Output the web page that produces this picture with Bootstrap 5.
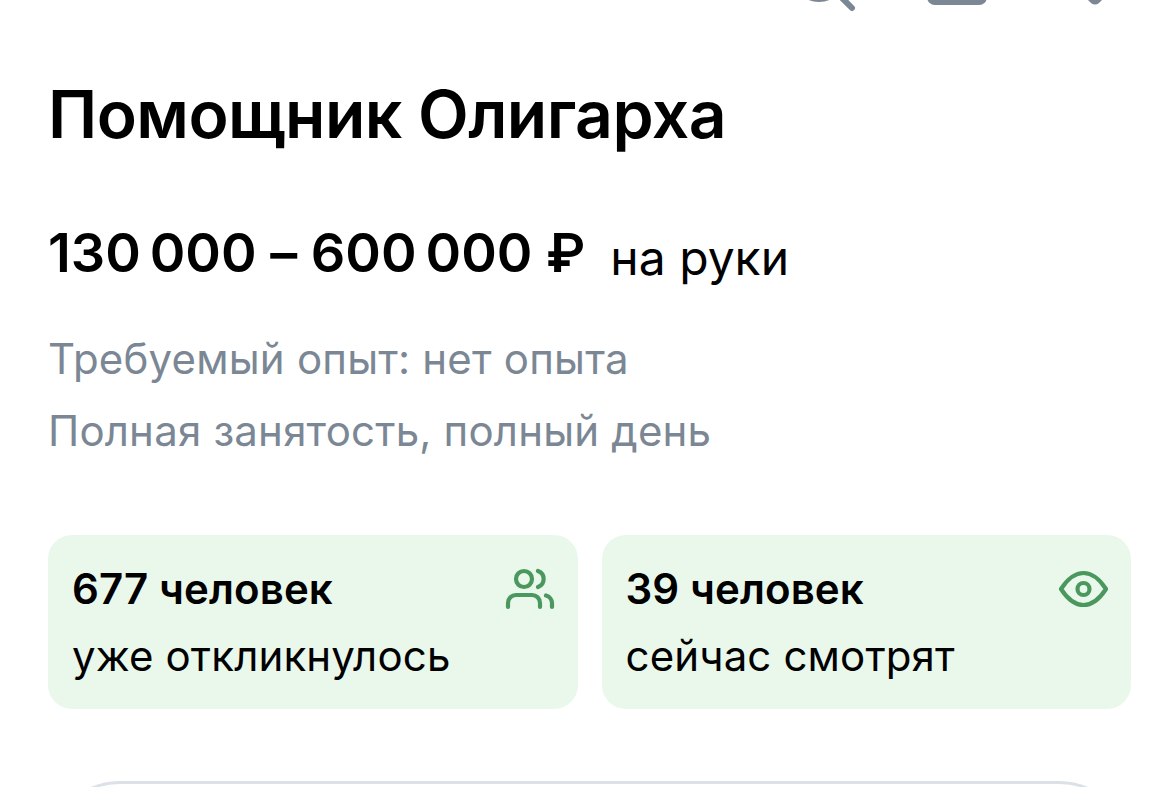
<!DOCTYPE html>
<html lang="ru">
<head>
    <meta charset="UTF-8">
    <meta name="viewport" content="width=device-width, initial-scale=1.0">
    <title>Помощник Олигарха</title>
    <link href="https://cdn.jsdelivr.net/npm/bootstrap@5.3.0/dist/css/bootstrap.min.css" rel="stylesheet">
    <style>
        body {
            font-family: Inter, sans-serif;
            color: #000;
            background: #fff;
        }
        .vacancy {
            height: 787px;
            padding: 0 41px 0 48px;
        }
        .top-icons {
            height: 12px;
        }
        h1 {
            font-size: 66px;
            line-height: 80px;
            font-weight: 600;
            letter-spacing: -0.53px;
            margin: 62px 0 0;
        }
        .salary {
            margin-top: 63px;
            gap: 25px;
            line-height: 72px;
        }
        .salary-sum {
            font-size: 54px;
            font-weight: 600;
            letter-spacing: -0.04px;
        }
        .salary-note {
            font-size: 48px;
            padding-top: 5px;
            line-height: 72px;
        }
        .terms {
            font-size: 42px;
            line-height: 72px;
            letter-spacing: 0.19px;
            color: #7b8794;
            margin-top: 29px;
        }
        .stats {
            gap: 24px;
            margin-top: 68px;
        }
        .stat-box {
            height: 174px;
            padding: 20px 23px 0 24px;
            border-radius: 24px;
            background: #eaf8eb;
            font-size: 42px;
            line-height: 68px;
            letter-spacing: 0.14px;
        }
        .stat-box strong {
            font-weight: 600;
            letter-spacing: 0.1px;
        }
        .stat-caption {
            line-height: 66px;
        }
        .stat-box svg {
            fill: none;
            stroke: #4b985f;
            stroke-width: 4.2;
            stroke-linecap: round;
            stroke-linejoin: round;
        }
        .bottom-btn {
            height: 144px;
            margin-top: 72px;
            border: 3px solid #dce1e8;
            border-radius: 72px;
        }
    </style>
</head>
<body>
<main class="vacancy overflow-hidden">
    <div class="top-icons d-flex justify-content-end">
        <svg width="331" height="12" viewBox="800 0 331 12">
            <path d="M795-25a24 24 0 1 0 48 0M837-7l15 15" fill="none" stroke="#7b8794" stroke-width="6" stroke-linecap="round"/>
            <path d="M927-10h60v7a8 8 0 0 1-8 8h-44a8 8 0 0 1-8-8z" fill="#7b8794"/>
            <path d="M1078-10l13 13q4 3 8 0l13-13z" fill="#7b8794"/>
        </svg>
    </div>
    <h1 class="text-nowrap">Помощник Олигарха</h1>
    <div class="salary d-flex text-nowrap">
        <span class="salary-sum">130&#8239;000 – 600&#8239;000 ₽</span>
        <span class="salary-note">на руки</span>
    </div>
    <div class="terms">
        <div>Требуемый опыт: нет опыта</div>
        <div>Полная занятость, полный день</div>
    </div>
    <div class="stats d-flex">
        <div class="stat-box flex-fill w-50">
            <div class="d-flex justify-content-between align-items-center">
                <strong>677 человек</strong>
                <svg width="50" height="48" viewBox="505 565 50 48">
                    <circle cx="524" cy="579" r="8"/>
                    <path d="M508 607v-4a8 8 0 0 1 8-8h16a8 8 0 0 1 8 8v4M538 571a8.500 8.500 0 0 1 0 16M546 595.500a8 8 0 0 1 6 7.500v4"/>
                </svg>
            </div>
            <div class="stat-caption">уже откликнулось</div>
        </div>
        <div class="stat-box flex-fill w-50">
            <div class="d-flex justify-content-between align-items-center">
                <strong>39 человек</strong>
                <svg width="50" height="48" viewBox="1058 565 50 48">
                    <path d="M1061 589C1067.500 579 1075 573 1083.500 573S1099.500 579 1106 589C1099.500 599 1092 605 1083.500 605S1067.500 599 1061 589z"/>
                    <circle cx="1083.500" cy="589" r="6"/>
                </svg>
            </div>
            <div class="stat-caption">сейчас смотрят</div>
        </div>
    </div>
    <div class="bottom-btn"></div>
</main>
<script src="https://cdn.jsdelivr.net/npm/bootstrap@5.3.0/dist/js/bootstrap.bundle.min.js"></script>
</body>
</html>
